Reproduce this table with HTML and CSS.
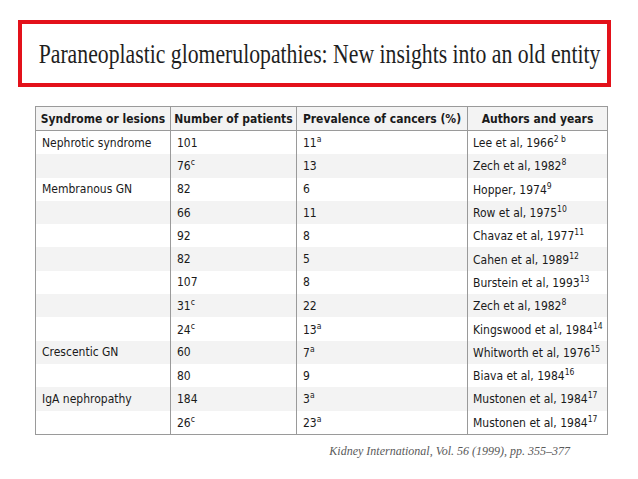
FILE: index.html
```html
<!DOCTYPE html>
<html lang="en">
<head>
<meta charset="utf-8">
<title>Paraneoplastic glomerulopathies</title>
<link rel="stylesheet" href="styles.css">
</head>
<body>
<div class="title-box">
  <h1 class="title">Paraneoplastic glomerulopathies: New insights into an old entity</h1>
</div>
<div class="content">
<table class="data">
  <colgroup>
    <col class="c1"><col class="c2"><col class="c3"><col class="c4">
  </colgroup>
  <thead>
    <tr>
      <th>Syndrome or lesions</th>
      <th>Number of patients</th>
      <th>Prevalence of cancers (%)</th>
      <th>Authors and years</th>
    </tr>
  </thead>
  <tbody>
    <tr><td>Nephrotic syndrome</td><td>101</td><td>11<sup>a</sup></td><td>Lee et al, 1966<sup>2 b</sup></td></tr>
    <tr><td></td><td>76<sup>c</sup></td><td>13</td><td>Zech et al, 1982<sup>8</sup></td></tr>
    <tr><td>Membranous GN</td><td>82</td><td>6</td><td>Hopper, 1974<sup>9</sup></td></tr>
    <tr><td></td><td>66</td><td>11</td><td>Row et al, 1975<sup>10</sup></td></tr>
    <tr><td></td><td>92</td><td>8</td><td>Chavaz et al, 1977<sup>11</sup></td></tr>
    <tr><td></td><td>82</td><td>5</td><td>Cahen et al, 1989<sup>12</sup></td></tr>
    <tr><td></td><td>107</td><td>8</td><td>Burstein et al, 1993<sup>13</sup></td></tr>
    <tr><td></td><td>31<sup>c</sup></td><td>22</td><td>Zech et al, 1982<sup>8</sup></td></tr>
    <tr><td></td><td>24<sup>c</sup></td><td>13<sup>a</sup></td><td>Kingswood et al, 1984<sup>14</sup></td></tr>
    <tr><td>Crescentic GN</td><td>60</td><td>7<sup>a</sup></td><td>Whitworth et al, 1976<sup>15</sup></td></tr>
    <tr><td></td><td>80</td><td>9</td><td>Biava et al, 1984<sup>16</sup></td></tr>
    <tr><td>IgA nephropathy</td><td>184</td><td>3<sup>a</sup></td><td>Mustonen et al, 1984<sup>17</sup></td></tr>
    <tr><td></td><td>26<sup>c</sup></td><td>23<sup>a</sup></td><td>Mustonen et al, 1984<sup>17</sup></td></tr>
  </tbody>
</table>
<p class="source">Kidney International, Vol. 56 (1999), pp. 355–377</p>
</div>
</body>
</html>
```
FILE: styles.css
```css
html, body {
  margin: 0;
  padding: 0;
  background: #ffffff;
}

.title-box {
  box-sizing: border-box;
  width: 593px;
  height: 67px;
  margin: 20px 0 0 18px;
  padding-left: 10px;
  border: 4px solid #e3111a;
  display: flex;
  align-items: center;
  justify-content: center;
  overflow: hidden;
}

.title {
  margin: 0;
  font-family: "Liberation Serif", "Times New Roman", serif;
  font-weight: normal;
  font-size: 27.5px;
  line-height: 1;
  color: #1e1e1e;
  white-space: nowrap;
  transform: scaleX(0.79);
  transform-origin: center;
  flex: none;
}

.content {
  width: 572px;
  margin: 19px 0 0 35px;
}

.data {
  width: 572px;
  table-layout: fixed;
  border-collapse: collapse;
  border: 1px solid #9a9a9a;
  font-family: "DejaVu Sans Condensed", "DejaVu Sans", sans-serif;
  font-stretch: condensed;
  font-size: 12px;
  color: #1a1a1a;
}

.c1 { width: 135px; }
.c2 { width: 126px; }
.c3 { width: 171px; }
.c4 { width: 140px; }

.data th,
.data td {
  padding: 0 6px;
  border-left: 1px solid #9a9a9a;
  border-right: 1px solid #9a9a9a;
  white-space: nowrap;
  overflow: hidden;
  vertical-align: middle;
}

.data td:last-child {
  padding-left: 5px;
}

.data th {
  height: 23px;
  font-weight: bold;
  text-align: center;
  background: #f3f3f3;
  border-bottom: 1px solid #9a9a9a;
  padding: 0 2px;
}

.data td {
  height: 23.3px;
  text-align: left;
}

.data tbody tr:nth-child(even) td {
  background: #f3f3f3;
}

.data sup {
  font-size: 8.5px;
  vertical-align: super;
  line-height: 1;
}

.source {
  margin: 8px 0 0 0;
  padding-right: 37px;
  text-align: right;
  font-family: "Liberation Serif", "Times New Roman", serif;
  font-style: italic;
  font-size: 12px;
  line-height: 16px;
  color: #5a5a5a;
}
```
